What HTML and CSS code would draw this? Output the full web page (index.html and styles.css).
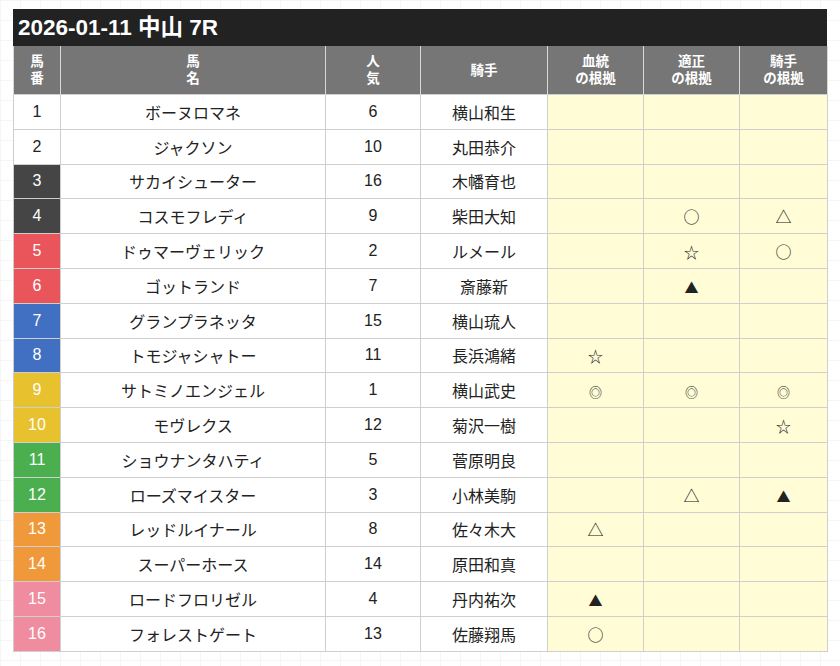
FILE: index.html
```html
<!DOCTYPE html>
<html lang="ja">
<head>
<meta charset="utf-8">
<link rel="stylesheet" href="styles.css">
</head>
<body>
<div class="page">
  <div class="title">2026-01-11 中山 7R</div>
  <table class="race">
    <colgroup>
      <col class="c-no"><col class="c-name"><col class="c-pop"><col class="c-jockey"><col class="c-m"><col class="c-m"><col class="c-m3">
    </colgroup>
    <thead>
      <tr>
        <th>馬<br>番</th>
        <th>馬<br>名</th>
        <th>人<br>気</th>
        <th>騎手</th>
        <th>血統<br>の根拠</th>
        <th>適正<br>の根拠</th>
        <th>騎手<br>の根拠</th>
      </tr>
    </thead>
    <tbody>
      <tr><td class="no f1">1</td><td>ボーヌロマネ</td><td>6</td><td>横山和生</td><td class="mk"></td><td class="mk"></td><td class="mk"></td></tr>
      <tr><td class="no f1">2</td><td>ジャクソン</td><td>10</td><td>丸田恭介</td><td class="mk"></td><td class="mk"></td><td class="mk"></td></tr>
      <tr><td class="no f2">3</td><td>サカイシューター</td><td>16</td><td>木幡育也</td><td class="mk"></td><td class="mk"></td><td class="mk"></td></tr>
      <tr><td class="no f2">4</td><td>コスモフレディ</td><td>9</td><td>柴田大知</td><td class="mk"></td><td class="mk">○</td><td class="mk">△</td></tr>
      <tr><td class="no f3">5</td><td>ドゥマーヴェリック</td><td>2</td><td>ルメール</td><td class="mk"></td><td class="mk"><span class="star">☆</span></td><td class="mk">○</td></tr>
      <tr><td class="no f3">6</td><td>ゴットランド</td><td>7</td><td>斎藤新</td><td class="mk"></td><td class="mk"><span class="tri">▲</span></td><td class="mk"></td></tr>
      <tr><td class="no f4">7</td><td>グランプラネッタ</td><td>15</td><td>横山琉人</td><td class="mk"></td><td class="mk"></td><td class="mk"></td></tr>
      <tr><td class="no f4">8</td><td>トモジャシャトー</td><td>11</td><td>長浜鴻緒</td><td class="mk"><span class="star">☆</span></td><td class="mk"></td><td class="mk"></td></tr>
      <tr><td class="no f5">9</td><td>サトミノエンジェル</td><td>1</td><td>横山武史</td><td class="mk"><span class="dbl">◎</span></td><td class="mk"><span class="dbl">◎</span></td><td class="mk"><span class="dbl">◎</span></td></tr>
      <tr><td class="no f5">10</td><td>モヴレクス</td><td>12</td><td>菊沢一樹</td><td class="mk"></td><td class="mk"></td><td class="mk"><span class="star">☆</span></td></tr>
      <tr><td class="no f6">11</td><td>ショウナンタハティ</td><td>5</td><td>菅原明良</td><td class="mk"></td><td class="mk"></td><td class="mk"></td></tr>
      <tr><td class="no f6">12</td><td>ローズマイスター</td><td>3</td><td>小林美駒</td><td class="mk"></td><td class="mk">△</td><td class="mk"><span class="tri">▲</span></td></tr>
      <tr><td class="no f7">13</td><td>レッドルイナール</td><td>8</td><td>佐々木大</td><td class="mk">△</td><td class="mk"></td><td class="mk"></td></tr>
      <tr><td class="no f7">14</td><td>スーパーホース</td><td>14</td><td>原田和真</td><td class="mk"></td><td class="mk"></td><td class="mk"></td></tr>
      <tr><td class="no f8">15</td><td>ロードフロリゼル</td><td>4</td><td>丹内祐次</td><td class="mk"><span class="tri">▲</span></td><td class="mk"></td><td class="mk"></td></tr>
      <tr><td class="no f8">16</td><td>フォレストゲート</td><td>13</td><td>佐藤翔馬</td><td class="mk">○</td><td class="mk"></td><td class="mk"></td></tr>
    </tbody>
  </table>
</div>
</body>
</html>
```

FILE: styles.css
```css
html, body {
  margin: 0;
  padding: 0;
}
body {
  background-color: #fff;
  background-image:
    linear-gradient(to right, #f3f5f7 1px, transparent 1px),
    linear-gradient(to bottom, #f3f5f7 1px, transparent 1px);
  background-size: 20px 20px;
  font-family: "Liberation Sans", "Noto Sans CJK JP", sans-serif;
  color: #222;
}
.page {
  padding: 9px 13px 0 13px;
  width: 814px;
}
.title {
  background: #222;
  color: #fff;
  font-weight: bold;
  font-size: 22.5px;
  height: 37px;
  line-height: 37px;
  padding-left: 5px;
  box-sizing: border-box;
}
.race {
  width: 814px;
  table-layout: fixed;
  border-collapse: collapse;
  background: #fff;
}
.c-no { width: 47px; }
.c-name { width: 265px; }
.c-pop { width: 95px; }
.c-jockey { width: 127px; }
.c-m { width: 96px; }
.c-m3 { width: 88px; }
.race th {
  background: #767676;
  color: #fff;
  font-weight: bold;
  font-size: 13.5px;
  line-height: 17px;
  height: 48px;
  padding: 0;
  border-left: 1px solid #d8d8d8;
  border-right: 1px solid #d8d8d8;
  text-align: center;
  vertical-align: middle;
}
.race td {
  height: 33.8px;
  padding: 0;
  border: 1px solid #cfcfcf;
  text-align: center;
  vertical-align: middle;
  font-size: 16px;
}
.race td.mk {
  background: #fffcd6;
  font-family: "Noto Sans CJK JP", sans-serif;
  font-size: 16px;
}
.mk .star { font-size: 15px; }
.mk .dbl { font-size: 13px; }
.mk .tri { font-size: 14px; }
.race td.no { color: #fff; }
.race td.f1 { background: #fff; color: #222; }
.race td.f2 { background: #454545; }
.race td.f3 { background: #e9555b; }
.race td.f4 { background: #4170c2; }
.race td.f5 { background: #e7c22e; }
.race td.f6 { background: #4bae4f; }
.race td.f7 { background: #f0993b; }
.race td.f8 { background: #ef8ca0; }
```
